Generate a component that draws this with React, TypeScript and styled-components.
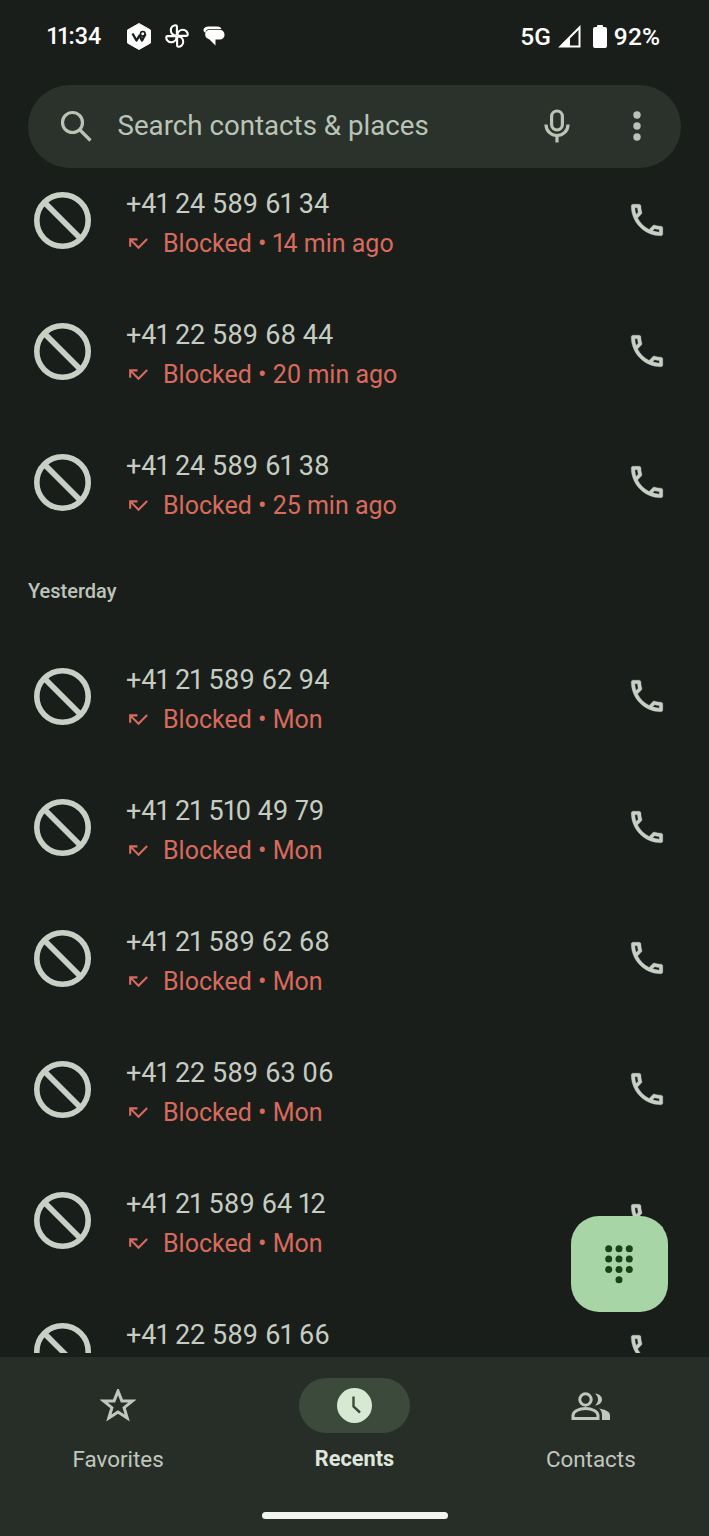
import React from "react";
import styled, { createGlobalStyle } from "styled-components";

const Global = createGlobalStyle`
  html, body { margin: 0; padding: 0; background: #1a1e1a; }
  * { box-sizing: border-box; }
`;

const Screen = styled.div`
  position: relative;
  width: 709px;
  height: 1536px;
  overflow: hidden;
  display: flex;
  flex-direction: column;
  background: #1a1e1a;
  font-family: Roboto, "Noto Sans", sans-serif;
  font-variant-numeric: proportional-nums;
`;

const StatusBar = styled.div`
  height: 72px;
  flex: none;
  display: flex;
  align-items: center;
  padding: 0 49px 0 47px;
  color: #fff;
  font-size: 24.5px;
  font-weight: 500;
`;
const Clock = styled.span`
  width: 80px;
  font-size: 23.4px;
`;
const NotifIcons = styled.div`
  display: flex;
  align-items: center;
  gap: 14px;
  flex: 1;
`;
const StatusRight = styled.div`
  display: flex;
  align-items: center;
  gap: 7px;
`;
const BatteryShape = styled.svg`
  margin-left: 5px;
`;

const SearchBar = styled.div`
  flex: none;
  height: 83px;
  margin: 12.5px 28px 0 27.5px;
  border-radius: 42px;
  background: #2a322b;
  display: flex;
  align-items: center;
  padding: 0 40px 0 32px;
  color: #b9c4b7;
`;
const SearchText = styled.span`
  flex: 1;
  margin-left: 26px;
  margin-top: -2px;
  font-size: 27.7px;
`;
const SearchActions = styled.div`
  display: flex;
  align-items: center;
  gap: 63px;
`;

const ListClip = styled.div`
  flex: 1;
  min-height: 0;
  overflow: hidden;
  margin-bottom: 4px;
`;
const ListInner = styled.div`
  margin-top: -12.5px;
`;
const Row = styled.div`
  height: 131px;
  display: flex;
  align-items: center;
  padding: 0 40.5px 0 34px;
`;
const RowText = styled.div`
  flex: 1;
  margin-left: 35px;
  padding-top: 6px;
`;
const Number = styled.div`
  font-size: 27px;
  line-height: 40px;
  color: #c5cdc3;
`;
const Sub = styled.div`
  display: flex;
  align-items: center;
  height: 39px;
  font-size: 25px;
  color: #d96a5e;
`;
const SubLabel = styled.span`
  margin-left: 12px;
`;
const Section = styled.div`
  height: 83px;
  padding: 3px 0 0 28px;
  display: flex;
  align-items: center;
  font-size: 20px;
  font-weight: 500;
  color: #bcc5ba;
`;

const Fab = styled.div`
  position: absolute;
  left: 571px;
  top: 1216px;
  width: 96.5px;
  height: 96px;
  border-radius: 28px;
  background: #a8d5a6;
  display: flex;
  align-items: center;
  justify-content: center;
`;

const Nav = styled.nav`
  flex: none;
  height: 179px;
  background: #272e27;
  position: relative;
  display: grid;
  grid-template-columns: repeat(3, 1fr);
  padding-top: 21px;
`;
const NavItem = styled.div`
  display: flex;
  flex-direction: column;
  align-items: center;
`;
const NavIcon = styled.div<{ $active?: boolean }>`
  width: 111px;
  height: 55px;
  border-radius: 28px;
  display: flex;
  align-items: center;
  justify-content: center;
  background: ${(p) => (p.$active ? "#3b4a3b" : "transparent")};
`;
const NavLabel = styled.span<{ $active?: boolean }>`
  margin-top: 12px;
  font-size: ${(p) => (p.$active ? "21.7px" : "22.4px")};
  line-height: 28px;
  font-weight: ${(p) => (p.$active ? 700 : 400)};
  color: ${(p) => (p.$active ? "#dfe6dc" : "#c0c8bd")};
`;
const HomeBar = styled.div`
  position: absolute;
  left: 262px;
  bottom: 17px;
  width: 186px;
  height: 7px;
  border-radius: 4px;
  background: #f2f4f0;
`;

const BlockIcon = () => (
  <svg width="57" height="57" viewBox="0 0 57 57" fill="none" stroke="#c8d0c6" strokeWidth="5.6">
    <circle cx="28.5" cy="28.5" r="25.7" />
    <line x1="11.5" y1="11.5" x2="45.5" y2="45.5" />
  </svg>
);

const CallIcon = () => (
  <svg width="42" height="42" viewBox="0.57 0.57 24 24" fill="#c8d0c6" stroke="#c8d0c6" strokeWidth="0.2">
    <path d="M6.54 5c.06.89.21 1.76.45 2.59l-1.2 1.2c-.41-1.2-.67-2.47-.76-3.79h1.51m9.86 12.02c.85.24 1.72.39 2.6.45v1.49c-1.32-.09-2.59-.35-3.8-.75l1.2-1.19M7.5 3H4c-.55 0-1 .45-1 1 0 9.39 7.61 17 17 17 .55 0 1-.45 1-1v-3.49c0-.55-.45-1-1-1-1.24 0-2.45-.2-3.57-.57-.1-.04-.21-.05-.31-.05-.26 0-.51.1-.71.29l-2.2 2.2c-2.83-1.45-5.15-3.76-6.59-6.59l2.2-2.2c.28-.28.36-.67.25-1.02C8.7 6.45 8.5 5.25 8.5 4c0-.55-.45-1-1-1z" />
  </svg>
);

const MissedIcon = () => (
  <svg width="25" height="25" viewBox="0 0 24 24" fill="#d96a5e">
    <path d="M19.59 7L12 14.59 6.41 9H11V7H3v8h2v-4.59l7 7 9-9z" />
  </svg>
);

const TwintIcon = () => (
  <svg width="24" height="27" viewBox="0 0 24 27">
    <path d="M12 0.5 L23.5 7 V20 L12 26.5 L0.5 20 V7 Z" fill="#fff" stroke="#fff" strokeLinejoin="round" />
    <path d="M5.5 10.5 L9.5 17.5 L12.5 12.5 L15 17.5 L18.5 11" fill="none" stroke="#1a1e1a" strokeWidth="2.4" strokeLinejoin="round" />
    <circle cx="15.8" cy="10.8" r="2.3" fill="none" stroke="#1a1e1a" strokeWidth="1.6" />
  </svg>
);

const PETAL = "M11.5 11.5 C8 11.5 5.8 9 5.8 6.3 C5.8 3.2 8.3 1.2 10.5 1.2 C11.4 1.2 11.9 1.7 11.9 2.6 V11.5";
const PinwheelIcon = () => (
  <svg width="24" height="24" viewBox="0 0 24 24" fill="none" stroke="#fff" strokeWidth="2.1" strokeLinejoin="round">
    {[0, 90, 180, 270].map((a) => (
      <path key={a} d={PETAL} transform={`rotate(${a} 12 12)`} />
    ))}
  </svg>
);

const BubbleIcon = () => (
  <svg width="22" height="22" viewBox="0 0 22 22" fill="#fff">
    <path d="M6 1.5 H14 C17 1.5 18 2.5 18.5 4 H7 C4 4 2.5 5.5 2.5 8 C1 7 0.5 6 0.5 5 C0.5 3 3 1.5 6 1.5Z" />
    <path d="M7 4.8 H16.5 C19.5 4.8 21.5 7 21.5 9.7 C21.5 12.5 19.5 14.6 16.5 14.6 H12.5 V20.5 L6.5 14.4 C3.5 13.5 2.2 11.7 2.2 9.7 C2.2 7 4 4.8 7 4.8Z" />
  </svg>
);

const SignalIcon = () => (
  <svg width="23" height="23" viewBox="0 0 23 23" fill="none">
    <path d="M21.5 2.5 V21.5 H2.5 Z" stroke="#fff" strokeWidth="2" />
    <path d="M2 22 L12 12 V22 Z" fill="#fff" />
  </svg>
);

const BatteryIcon = () => (
  <BatteryShape width="14" height="23" viewBox="0 0 14 23" fill="#fff">
    <rect x="4" y="0" width="6" height="3" rx="0.8" />
    <rect x="0" y="2" width="14" height="21" rx="2" />
  </BatteryShape>
);

const SearchIcon = () => (
  <svg width="32" height="32" viewBox="0 0 32 32" fill="none" stroke="#b9c4b7" strokeWidth="3.2">
    <circle cx="12.5" cy="12.5" r="10" />
    <line x1="20" y1="20" x2="30.5" y2="30.5" />
  </svg>
);

const MicIcon = () => (
  <svg width="26" height="34" viewBox="0 0 26 34" fill="none" stroke="#b9c4b7" strokeWidth="3.2">
    <rect x="7.6" y="2" width="10.8" height="19" rx="5.4" />
    <path d="M2 15.5 C2 22 7 26.5 13 26.5 C19 26.5 24 22 24 15.5" />
    <line x1="13" y1="26" x2="13" y2="33.5" />
  </svg>
);

const MoreIcon = () => (
  <svg width="8" height="30" viewBox="0 0 8 30" fill="#b9c4b7">
    <circle cx="4" cy="4" r="3.7" />
    <circle cx="4" cy="15" r="3.7" />
    <circle cx="4" cy="26" r="3.7" />
  </svg>
);

const DialIcon = () => (
  <svg width="32" height="39" viewBox="0 0 32 39" fill="#18411c">
    {[0, 1, 2].flatMap((r) =>
      [0, 1, 2].map((c) => <circle key={`${r}${c}`} cx={5.7 + c * 10.3} cy={3.8 + r * 10.3} r="3.5" />)
    )}
    <circle cx="16" cy="34.7" r="3.5" />
  </svg>
);

const StarIcon = () => (
  <svg width="36" height="34" viewBox="0 1.5 36 34" fill="none" stroke="#c0c8bd" strokeWidth="3" strokeLinejoin="miter">
    <path d="M18 3.6 L21.9 13.4 L32.6 13.4 L24.1 20.2 L27.2 30.6 L18 24.6 L8.8 30.6 L11.9 20.2 L3.4 13.4 L14.1 13.4 Z" />
  </svg>
);

const ClockIcon = () => (
  <svg width="35" height="35" viewBox="0 0 35 35">
    <circle cx="17.5" cy="17.5" r="17.5" fill="#d7e8d3" />
    <path d="M16.5 8.5 V18.5 L23 24.5" fill="none" stroke="#3b4a3b" strokeWidth="2.4" />
  </svg>
);

const PeopleIcon = () => (
  <svg width="40" height="28" viewBox="0 0 40 28" fill="none" stroke="#c0c8bd" strokeWidth="3">
    <circle cx="14.5" cy="7.5" r="5.7" />
    <path d="M2 26.5 V23.5 C2 19.5 8 16.5 14.5 16.5 C21 16.5 27 19.5 27 23.5 V26.5 Z" />
    <path d="M24 1.5 C28.5 2 31 4.5 31 7.5 C31 10.5 28.5 13 24 13.5 C26.2 11.5 27 9.5 27 7.5 C27 5.5 26.2 3.5 24 1.5Z" fill="#c0c8bd" stroke="none" />
    <path d="M28 16.5 C34 17.5 39 19.5 39 23.5 V28 H31 V23.5 C31 20.5 30.5 18.5 28 16.5Z" fill="#c0c8bd" stroke="none" />
  </svg>
);

type Call = { number: string; when?: string };

const today: Call[] = [
  { number: "+41 24 589 61 34", when: "14 min ago" },
  { number: "+41 22 589 68 44", when: "20 min ago" },
  { number: "+41 24 589 61 38", when: "25 min ago" },
];
const yesterday: Call[] = [
  { number: "+41 21 589 62 94", when: "Mon" },
  { number: "+41 21 510 49 79", when: "Mon" },
  { number: "+41 21 589 62 68", when: "Mon" },
  { number: "+41 22 589 63 06", when: "Mon" },
  { number: "+41 21 589 64 12", when: "Mon" },
  { number: "+41 22 589 61 66" },
];

const CallRow = ({ call }: { call: Call }) => (
  <Row>
    <BlockIcon />
    <RowText>
      <Number>{call.number}</Number>
      <Sub>
        {call.when && (
          <>
            <MissedIcon />
            <SubLabel>Blocked • {call.when}</SubLabel>
          </>
        )}
      </Sub>
    </RowText>
    <CallIcon />
  </Row>
);

export default function App() {
  return (
    <Screen>
      <Global />
      <StatusBar>
        <Clock>11:34</Clock>
        <NotifIcons>
          <TwintIcon />
          <PinwheelIcon />
          <BubbleIcon />
        </NotifIcons>
        <StatusRight>
          <span>5G</span>
          <SignalIcon />
          <BatteryIcon />
          <span>92%</span>
        </StatusRight>
      </StatusBar>
      <SearchBar>
        <SearchIcon />
        <SearchText>Search contacts &amp; places</SearchText>
        <SearchActions>
          <MicIcon />
          <MoreIcon />
        </SearchActions>
      </SearchBar>
      <ListClip>
        <ListInner>
          {today.map((c) => (
            <CallRow key={c.number} call={c} />
          ))}
          <Section>Yesterday</Section>
          {yesterday.map((c) => (
            <CallRow key={c.number} call={c} />
          ))}
        </ListInner>
      </ListClip>
      <Nav>
        <NavItem>
          <NavIcon>
            <StarIcon />
          </NavIcon>
          <NavLabel>Favorites</NavLabel>
        </NavItem>
        <NavItem>
          <NavIcon $active>
            <ClockIcon />
          </NavIcon>
          <NavLabel $active>Recents</NavLabel>
        </NavItem>
        <NavItem>
          <NavIcon>
            <PeopleIcon />
          </NavIcon>
          <NavLabel>Contacts</NavLabel>
        </NavItem>
        <HomeBar />
      </Nav>
      <Fab>
        <DialIcon />
      </Fab>
    </Screen>
  );
}
